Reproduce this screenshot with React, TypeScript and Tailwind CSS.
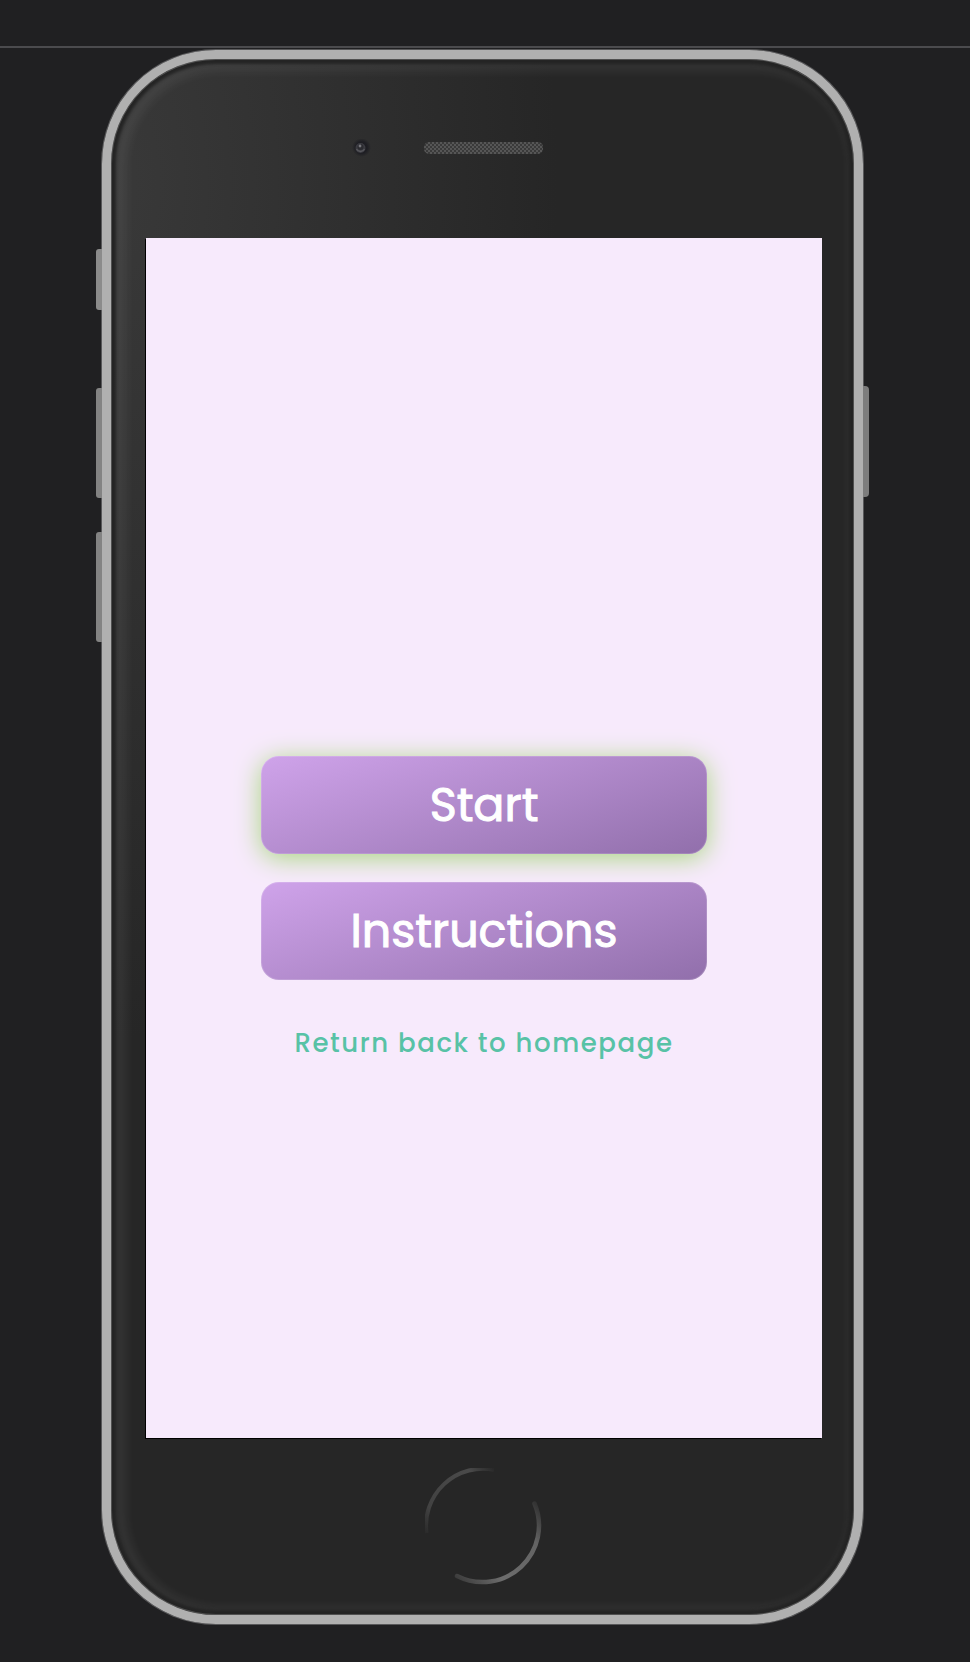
import type { ReactNode } from "react";

function SideButton({ className }: { className: string }) {
  return <div aria-hidden="true" className={`absolute ${className}`} />;
}

function Camera() {
  return (
    <svg
      aria-hidden="true"
      viewBox="0 0 20 20"
      className="mr-[53px] size-5 justify-self-end"
    >
      <defs>
        <radialGradient id="lens">
          <stop offset="0" stopColor="#1b1b20" />
          <stop offset="0.6" stopColor="#1e1e23" />
          <stop offset="1" stopColor="#1e1e23" stopOpacity="0" />
        </radialGradient>
      </defs>
      <circle cx="10.500" cy="8.500" r="9.500" fill="url(#lens)" />
      <circle cx="9.500" cy="9" r="5" fill="#3b3b41" />
      <path d="M5.500 10a4.500 4.500 0 0 0 8 0" fill="none" stroke="#57575c" strokeWidth="1.500" />
      <circle cx="9.500" cy="8" r="3" fill="#2c2c31" />
      <circle cx="9" cy="7" r="1.400" fill="#77777c" />
    </svg>
  );
}

function Speaker() {
  return (
    <svg aria-hidden="true" viewBox="0 0 120 13" className="h-[13px] w-[120px]">
      <defs>
        <pattern id="mesh" width="4" height="4" patternUnits="userSpaceOnUse">
          <rect width="4" height="4" fill="#3a3a3a" />
          <rect width="2" height="2" fill="#565656" />
          <rect x="2" y="2" width="2" height="2" fill="#565656" />
        </pattern>
      </defs>
      <rect width="119" height="12" rx="5" fill="url(#mesh)" />
    </svg>
  );
}

function HomeButton() {
  return (
    <svg aria-hidden="true" viewBox="0 0 118 118" className="size-[118px]" fill="none">
      <defs>
        <linearGradient id="arcTop" gradientUnits="userSpaceOnUse" x1="2" y1="72" x2="72" y2="2">
          <stop offset="0" stopColor="#262626" />
          <stop offset="0.25" stopColor="#424242" />
          <stop offset="0.8" stopColor="#4a4a4a" />
          <stop offset="1" stopColor="#262626" />
        </linearGradient>
        <linearGradient id="arcBottom" gradientUnits="userSpaceOnUse" x1="30" y1="109" x2="112" y2="34">
          <stop offset="0" stopColor="#3c3c3c" />
          <stop offset="0.3" stopColor="#6c6c6c" />
          <stop offset="0.75" stopColor="#636363" />
          <stop offset="1" stopColor="#303030" />
        </linearGradient>
      </defs>
      <path d="M1.500 65A57 57 0 0 1 69 1.800" stroke="url(#arcTop)" strokeWidth="4" />
      <path
        d="M109.500 35.500A56.500 56.500 0 0 1 32 108"
        stroke="url(#arcBottom)"
        strokeWidth="4.500"
        strokeLinecap="round"
      />
    </svg>
  );
}

function MenuButton({ children, glow = false }: { children: ReactNode; glow?: boolean }) {
  return (
    <button
      type="button"
      className={`h-[98px] w-full cursor-pointer rounded-[18px] border border-white/15 bg-[linear-gradient(162deg,#cfa3ea,#916fab)] bg-origin-border text-[46px] leading-[60px] text-white [-webkit-text-stroke:1px_#ffffff] ${
        glow ? "shadow-[0_4px_26px_#a9d77f]" : ""
      }`}
    >
      {children}
    </button>
  );
}

export default function App() {
  return (
    <div className="min-h-screen bg-[#202022] pb-9 font-['Poppins','Inter',sans-serif]">
      <header className="h-12 border-b-2 border-[#4b4b4e]" />
      <div className="pt-0.5 pr-[21px] pl-4">
        <div className="relative mx-auto w-full max-w-[761px] rounded-[114px] border-9 border-[#b0b0b0] bg-[radial-gradient(ellipse_60%_55%_at_0%_8%,#393939,#262626)] pr-8 pl-[35px] shadow-[0_0_0_1px_#58585a,inset_0_0_0_1px_#505050,inset_0_0_3px_5px_#242424,inset_5px_2px_8px_11px_rgba(255,255,255,0.06)]">
          <SideButton className="-left-[15px] top-[190px] h-[61px] w-[6px] rounded-l-[3px] bg-[#8b8b8b]" />
          <SideButton className="-left-[15px] top-[329px] h-[110px] w-[6px] rounded-l-[3px] bg-[#838383]" />
          <SideButton className="-left-[15px] top-[473px] h-[110px] w-[6px] rounded-l-[3px] bg-[#838383]" />
          <SideButton className="-right-[15px] top-[327px] h-[111px] w-[6px] rounded-r-[4px] bg-[#7d7d7d]" />

          <div className="grid h-[179px] grid-cols-[1fr_auto_1fr] items-center">
            <Camera />
            <Speaker />
          </div>

          <main className="flex aspect-[169/300] w-full flex-col items-center bg-[#f7eafc] pt-[518px] shadow-[-1px_1px_0_#000000]">
            <div className="flex w-[66%] flex-col gap-7">
              <MenuButton glow>Start</MenuButton>
              <MenuButton>Instructions</MenuButton>
            </div>
            <a href="#home" className="mt-[43px] text-[26px] font-medium leading-10 tracking-[0.06em] text-[#58c2a6]">
              Return back to homepage
            </a>
          </main>

          <div className="flex h-[177px] items-center justify-center">
            <HomeButton />
          </div>
        </div>
      </div>
    </div>
  );
}
